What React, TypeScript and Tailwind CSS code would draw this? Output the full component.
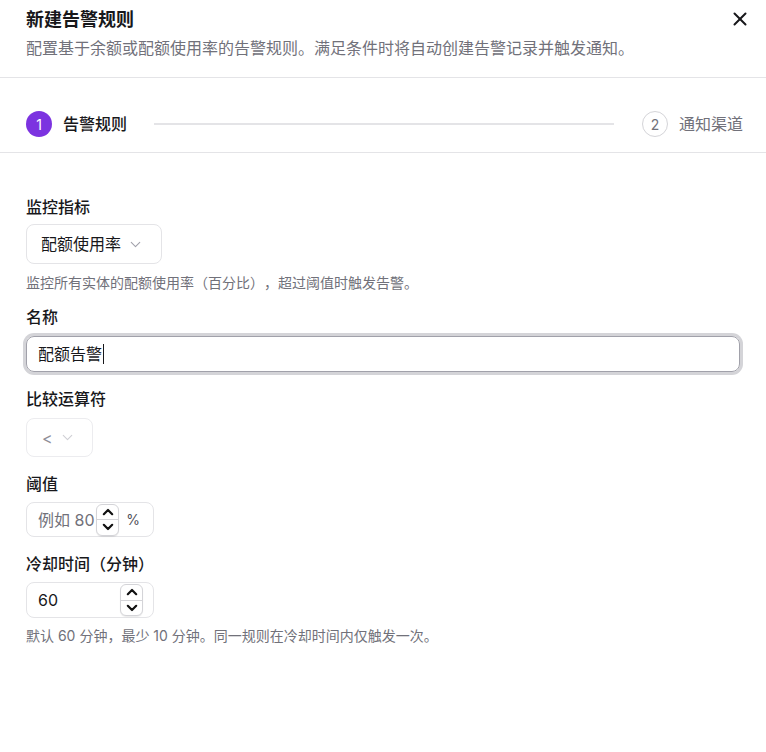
import React from 'react';
import { X, ChevronDown } from 'lucide-react';

const font = { fontFamily: 'Inter, "Noto Sans CJK SC", sans-serif' };

function Spinner() {
  return (
    <div className="flex h-[32px] w-[23px] shrink-0 flex-col overflow-hidden rounded-md border border-[#d4d4d8] bg-white shadow-[0_1px_1px_rgba(0,0,0,0.08)]">
      <div className="flex flex-1 items-center justify-center border-b border-[#d4d4d8]">
        <svg width="12" height="8" viewBox="0 0 12 8" fill="none">
          <path d="M1.8 6.2L6 2L10.2 6.2" stroke="#111" strokeWidth="2.2" strokeLinecap="round" strokeLinejoin="round" />
        </svg>
      </div>
      <div className="flex flex-1 items-center justify-center">
        <svg width="12" height="8" viewBox="0 0 12 8" fill="none">
          <path d="M1.8 1.8L6 6L10.2 1.8" stroke="#111" strokeWidth="2.2" strokeLinecap="round" strokeLinejoin="round" />
        </svg>
      </div>
    </div>
  );
}

function Label({ children }: { children: React.ReactNode }) {
  return <div className="text-[16px] font-medium leading-6 text-[#18181b]">{children}</div>;
}

export default function App() {
  return (
    <div className="min-h-[752px] w-[766px] bg-white [text-spacing-trim:space-all]" style={font}>
      {/* Header */}
      <div className="relative border-b border-[#e4e4e7] px-[26px] pb-[17px] pt-[8px]">
        <h2 className="text-[18px] font-semibold leading-6 text-[#18181b]">新建告警规则</h2>
        <p className="mt-[4px] text-[16px] leading-6 text-[#71717a]">
          配置基于余额或配额使用率的告警规则。满足条件时将自动创建告警记录并触发通知。
        </p>
        <button className="absolute right-[15px] top-[8px] text-[#18181b]">
          <X size={22} strokeWidth={2.2} />
        </button>
      </div>

      {/* Stepper */}
      <div className="flex items-center border-b border-[#e4e4e7] pb-[15px] pl-[26px] pr-[23px] pt-[33px]">
        <div className="flex items-center gap-[11px]">
          <div className="flex h-[26px] w-[26px] items-center justify-center rounded-full bg-[#7c33e0] text-[14px] text-white">1</div>
          <span className="text-[16px] font-medium leading-6 text-[#18181b]">告警规则</span>
        </div>
        <div className="ml-[27px] mr-[28px] h-[2px] flex-1 bg-[#e4e4e7]" />
        <div className="flex items-center gap-[11px]">
          <div className="flex h-[26px] w-[26px] items-center justify-center rounded-full border border-[#d4d4d8] text-[14px] text-[#71717a]">2</div>
          <span className="text-[16px] leading-6 text-[#71717a]">通知渠道</span>
        </div>
      </div>

      {/* Form */}
      <div className="px-[26px] pt-[42px]">
        <Label>监控指标</Label>
        <div className="mt-[5px] flex h-[40px] w-[136px] items-center justify-between rounded-lg border border-[#e4e4e7] pl-[14px] pr-[17px] text-[16px] text-[#18181b]">
          <span>配额使用率</span>
          <ChevronDown size={17} strokeWidth={1.5} className="text-[#a1a1aa]" />
        </div>
        <p className="mt-[9px] text-[14px] leading-5 text-[#71717a]">
          监控所有实体的配额使用率（百分比），超过阈值时触发告警。
        </p>

        <div className="mt-[12px]">
          <Label>名称</Label>
        </div>
        <div className="mt-[7px] flex h-[36px] items-center rounded-lg border border-[#a1a1aa] px-[11px] text-[16px] text-[#18181b] ring-[3px] ring-[#d4d4d8]">
          <span>配额告警</span>
          <span className="ml-[1px] h-[20px] w-[1px] bg-[#18181b]" />
        </div>

        <div className="mt-[15px]">
          <Label>比较运算符</Label>
        </div>
        <div className="mt-[7px] flex h-[39px] w-[67px] items-center justify-between rounded-lg border border-[#ececef] pl-[15px] pr-[16px] text-[16px] text-[#8e8e98]">
          <span>&lt;</span>
          <ChevronDown size={17} strokeWidth={1.5} className="text-[#cfcfd4]" />
        </div>

        <div className="mt-[15px]">
          <Label>阈值</Label>
        </div>
        <div className="mt-[6px] flex h-[35px] w-[128px] items-center rounded-lg border border-[#e4e4e7] pl-[11px] pr-[13px] text-[16px]">
          <span className="w-[58px] whitespace-nowrap text-[#71717a]">例如 80</span>
          <Spinner />
          <span className="ml-auto text-[14px] text-[#52525b]">%</span>
        </div>

        <div className="mt-[15px]">
          <Label>冷却时间（分钟）</Label>
        </div>
        <div className="mt-[6px] flex h-[36px] w-[128px] items-center justify-between rounded-lg border border-[#e4e4e7] pl-[11px] pr-[10px] text-[16px] text-[#18181b]">
          <span>60</span>
          <Spinner />
        </div>
        <p className="mt-[8px] text-[14px] leading-5 text-[#71717a]">
          默认 60 分钟，最少 10 分钟。同一规则在冷却时间内仅触发一次。
        </p>
      </div>
    </div>
  );
}
